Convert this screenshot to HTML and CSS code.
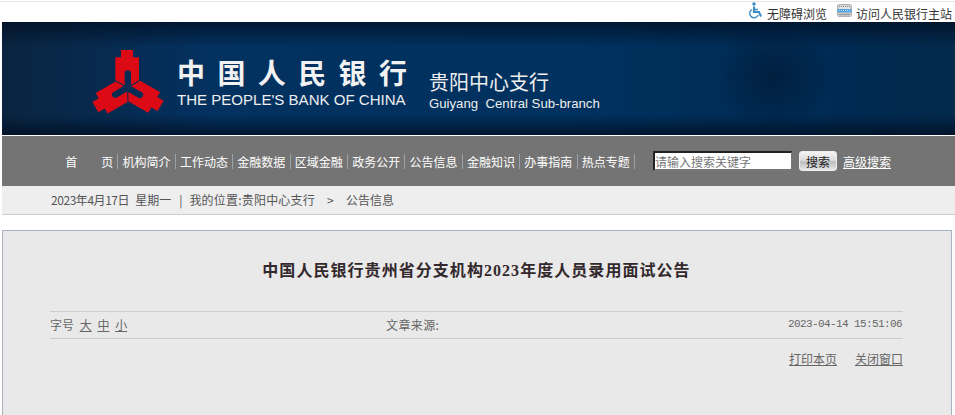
FILE: index.html
```html
<!DOCTYPE html>
<html lang="zh-CN">
<head>
  <meta charset="UTF-8" />
  <title>中国人民银行贵州省分支机构2023年度人员录用面试公告</title>
  <link rel="stylesheet" href="styles.css">
</head>
<body>
  <!-- Top links -->
  <div class="topbar">
    <a class="top-link" href="#">
      <svg class="icon-access" width="15" height="17" viewBox="0 0 15 17">
        <circle cx="6" cy="2" r="1.7" fill="#3a8ac8"/>
        <path d="M6 4.5V10H11L13 14.5" fill="none" stroke="#3a8ac8" stroke-width="2"/>
        <path d="M6 7.5H10" stroke="#3a8ac8" stroke-width="1.5"/>
        <path d="M4 7.5A4.4 4.4 0 1 0 10.2 13" fill="none" stroke="#3a8ac8" stroke-width="1.4"/>
      </svg>
      无障碍浏览
    </a>
    <a class="top-link" href="#">
      <svg class="icon-home" width="15" height="14" viewBox="0 0 15 14">
        <rect x="0.5" y="0.5" width="14" height="12" rx="1.5" fill="#d4d4d4" stroke="#b4b4b4"/>
        <path d="M2 2.5H13" stroke="#8f8f8f" stroke-dasharray="1 1"/>
        <path d="M2 4H13" stroke="#f2f2f2"/>
        <rect x="0.5" y="5" width="14" height="3.5" fill="#4f9fdc"/>
        <path d="M2 6.5H13" stroke="#cfe6f7" stroke-dasharray="1 1"/>
        <path d="M2 10.5H13" stroke="#999" stroke-width="1.5"/>
      </svg>
      访问人民银行主站
    </a>
  </div>

  <!-- Banner -->
  <div class="banner">
    <svg class="logo" width="90" height="80" viewBox="0 0 270 240">
      <g fill="#dc0a14">
        <path d="M108 30H144V52H162V121L138 135V100A9.500 9.500 0 0 0 119 100V136L91 121V52H108Z"/>
        <path d="M108 30H144V52H162V121L138 135V100A9.500 9.500 0 0 0 119 100V136L91 121V52H108Z" transform="rotate(120 128 143)"/>
        <path d="M108 30H144V52H162V121L138 135V100A9.500 9.500 0 0 0 119 100V136L91 121V52H108Z" transform="rotate(240 128 143)"/>
      </g>
    </svg>
    <div class="bank-name">
      <div class="bank-cn">中国人民银行</div>
      <div class="bank-en">THE PEOPLE'S BANK OF CHINA</div>
    </div>
    <div class="branch-name">
      <div class="branch-cn">贵阳中心支行</div>
      <div class="branch-en">Guiyang&nbsp; Central Sub-branch</div>
    </div>
  </div>

  <!-- Main nav -->
  <div class="nav">
    <ul class="nav-list">
      <li><a href="#">首&#12288;&#12288;页</a></li>
      <li><a href="#">机构简介</a></li>
      <li><a href="#">工作动态</a></li>
      <li><a href="#">金融数据</a></li>
      <li><a href="#">区域金融</a></li>
      <li><a href="#">政务公开</a></li>
      <li><a href="#">公告信息</a></li>
      <li><a href="#">金融知识</a></li>
      <li><a href="#">办事指南</a></li>
      <li><a href="#">热点专题</a></li>
    </ul>
    <input class="search-input" type="text" value="请输入搜索关键字" />
    <button class="search-btn">搜索</button>
    <a class="search-adv" href="#">高级搜索</a>
  </div>

  <!-- Breadcrumb -->
  <div class="crumb">
    <span class="crumb-date">2023年4月17日</span>
    <span class="crumb-week">星期一</span>
    <span class="crumb-sep">|</span>
    <span class="crumb-here">我的位置:贵阳中心支行</span>
    <span class="crumb-arrow">&gt;</span>
    <span>公告信息</span>
  </div>

  <!-- Article -->
  <div class="article">
    <h1 class="title">中国人民银行贵州省分支机构2023年度人员录用面试公告</h1>
    <div class="meta">
      <div class="meta-size">
        字号
        <a href="#">大</a>
        <a href="#">中</a>
        <a href="#">小</a>
      </div>
      <div class="meta-source">文章来源:</div>
      <div class="meta-date">2023-04-14 15:51:06</div>
    </div>
    <div class="tools">
      <a href="#">打印本页</a>
      <a href="#">关闭窗口</a>
    </div>
  </div>
</body>
</html>
```

FILE: styles.css
```css
html, body {
  height: 415px;
  overflow: hidden;
}
body {
  margin: 0;
  padding: 0;
  background: #fff;
  font-family: 'Noto Sans CJK SC', sans-serif;
  font-size: 12px;
  color: #555;
}
a {
  color: inherit;
}
.topbar {
  height: 20px;
  margin-top: 1px;
  border-top: 1px solid #e6e6e6;
  display: flex;
  justify-content: flex-end;
  align-items: center;
  gap: 10px;
  padding-right: 3px;
  color: #333;
}
.top-link {
  display: flex;
  align-items: center;
  text-decoration: none;
  position: relative;
  top: 1px;
}
.icon-access {
  margin-right: 4px;
  position: relative;
  top: -3px;
}
.icon-home {
  margin-right: 4px;
  position: relative;
  top: -2px;
}
.banner {
  height: 113px;
  margin-left: 2px;
  border-bottom: 1px solid #fff;
  display: flex;
  align-items: flex-start;
  padding-left: 83px;
  color: #fff;
  background:
    radial-gradient(ellipse 60px 55px at 770px 55px, rgba(0, 20, 45, 0.55), rgba(0, 20, 45, 0) 100%),
    linear-gradient(to bottom, rgba(0, 15, 35, 0.75) 0, rgba(0, 15, 35, 0) 22%, rgba(0, 15, 35, 0) 82%, rgba(0, 15, 35, 0.8) 100%),
    linear-gradient(to right, #0a2440 0, #033160 22%, #00315f 60%, #002a52 88%, #03294b 100%);
}
.logo {
  margin-top: 18px;
  flex: none;
}
.bank-name {
  margin-left: 2px;
  margin-top: 34px;
  width: 252px;
}
.bank-cn {
  font-size: 28px;
  font-weight: 700;
  line-height: 32px;
  letter-spacing: 12.4px;
  white-space: nowrap;
  color: #f2f2f2;
}
.bank-en {
  font-family: 'Liberation Sans', sans-serif;
  font-size: 15.06px;
  line-height: 17px;
  margin-top: 3px;
  white-space: nowrap;
  color: #eee;
}
.branch-name {
  margin-top: 48px;
}
.branch-cn {
  font-size: 20px;
  line-height: 24px;
  color: #eee;
}
.branch-en {
  font-family: 'Liberation Sans', sans-serif;
  font-size: 13.2px;
  line-height: 15px;
  margin-top: 2px;
  color: #eee;
  white-space: nowrap;
}
.nav {
  height: 50px;
  margin-left: 2px;
  background: #747474;
  display: flex;
  align-items: center;
  padding-left: 59px;
  color: #fff;
  box-sizing: border-box;
}
.nav-list {
  list-style: none;
  margin: 0;
  padding: 0;
  display: flex;
  width: 592px;
  flex: none;
}
.nav-list li {
  width: 57.4px;
  height: 15px;
  line-height: 15px;
  text-align: center;
  border-right: 1px solid #9aa2aa;
  box-sizing: border-box;
  white-space: nowrap;
}
.nav-list a {
  text-decoration: none;
}
.search-input {
  width: 139px;
  height: 20px;
  box-sizing: border-box;
  padding: 0;
  border: 2px inset #777;
  border-right-width: 1px;
  background: #fff;
  color: #777;
  font-family: inherit;
  font-size: 12px;
}
.search-btn {
  width: 38px;
  height: 20px;
  margin-left: 7px;
  padding: 0;
  border: 1px solid #eee;
  border-radius: 3px;
  background: linear-gradient(to bottom, #f4f4f4 0, #dcdcdc 45%, #bdbdbd 55%, #e8e8e8 100%);
  color: #222;
  font-family: inherit;
  font-size: 12px;
}
.search-adv {
  margin-left: 6px;
  color: #fff;
}
.crumb {
  height: 28px;
  margin-left: 2px;
  padding-left: 49px;
  background: #eee;
  border-bottom: 1px solid #ccc;
  display: flex;
  align-items: center;
  line-height: 28px;
  white-space: nowrap;
}
.crumb-date {
  letter-spacing: -0.45px;
}
.crumb-week {
  margin-left: 6px;
}
.crumb-sep {
  margin: 0 7px 0 8px;
}
.crumb-here {
  letter-spacing: 0.2px;
}
.crumb-arrow {
  margin: 0 12px;
  width: 7px;
}
.article {
  margin: 15px 3px 0 2px;
  height: 200px;
  box-sizing: border-box;
  border: 1px solid #a9b3c0;
  border-bottom: none;
  background: #e9e9e9;
  padding: 0 48px 0 47px;
}
.title {
  margin: 29px 0 0;
  font-family: 'Liberation Serif', 'Noto Sans CJK SC', serif;
  font-size: 16px;
  font-weight: 700;
  letter-spacing: 1.05px;
  line-height: 22px;
  text-align: center;
  color: #33282c;
}
.meta {
  margin-top: 29px;
  height: 24px;
  padding-bottom: 2px;
  border-top: 1px solid #ccc;
  border-bottom: 1px solid #ccc;
  display: flex;
  align-items: center;
  color: #666;
}
.meta-size {
  width: 336px;
  flex: none;
}
.meta-size a {
  margin-left: 3px;
}
.meta-source {
  flex: 1;
  letter-spacing: 0.4px;
}
.meta-date {
  font-family: 'Liberation Mono', monospace;
  font-size: 11px;
  letter-spacing: -0.6px;
  padding-right: 1px;
}
.tools {
  margin-top: 11px;
  display: flex;
  justify-content: flex-end;
  gap: 18px;
  color: #666;
}
```
